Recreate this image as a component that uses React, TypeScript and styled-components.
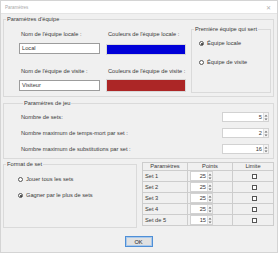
import styled, {createGlobalStyle} from 'styled-components';

const GlobalStyle = createGlobalStyle`
	html, body {
		margin: 0;
		padding: 0;
		background: #f0f0f0;
	}
	body {
		font-family: 'Liberation Sans', Arial, sans-serif;
		font-size: 5.7px;
		color: #383838;
	}
`;

const Window = styled.div`
	width: 278px;
	height: 253px;
	box-sizing: border-box;
	display: flex;
	flex-direction: column;
	background: #f0f0f0;
	border: 1px solid #d4d4d4;
	overflow: hidden;
`;
const TitleBar = styled.div`
	height: 12px;
	flex-shrink: 0;
	display: flex;
	align-items: center;
	justify-content: space-between;
	padding: 0 6px 0 4px;
	background: #fff;
	border-bottom: 1px solid #e4e4e4;
	color: #a8a8a8;
	font-size: 4.5px;
`;
const Close = styled.span`
	font-size: 6px;
	color: #b0b0b0;
`;
const Body = styled.div`
	flex: 1;
	display: flex;
	flex-direction: column;
	padding: 2px 3px 0 2px;
`;
const Group = styled.fieldset`
	margin: 0;
	padding: 0;
	min-width: 0;
	border: 1px solid #dadada;
	box-sizing: border-box;
`;
const Legend = styled.legend`
	margin-left: 2px;
	padding: 0 1px;
	line-height: 7px;
`;
const TeamRow = styled.div`
	display: flex;
	align-items: flex-start;
`;
const TeamGrid = styled.div`
	display: grid;
	grid-template-columns: 81px 80px;
	column-gap: 6px;
	padding: 8px 0 4px 15px;
	align-items: start;
	white-space: nowrap;
`;
const FieldLabel = styled.div<{$top?: number}>`
	line-height: 7px;
	margin-top: ${({$top}) => $top ?? 0}px;
	padding-left: 2px;
	margin-bottom: 5px;
`;
const TextBox = styled.div`
	height: 11px;
	box-sizing: border-box;
	background: #fff;
	border: 1px solid #9c9c9c;
	padding-left: 2px;
	line-height: 9px;
`;
const Swatch = styled.div<{$color: string; $h: number; $shift: number}>`
	height: ${({$h}) => $h}px;
	margin-top: ${({$shift}) => $shift}px;
	background: ${({$color}) => $color};
	border: 1px solid #d8d8d8;
	box-sizing: border-box;
`;
const ServeGroup = styled(Group)`
	width: 80px;
	height: 67px;
	margin: 3px 2px 0 auto;
`;
const RadioList = styled.div<{$gap: number; $top: number; $left: number}>`
	display: flex;
	flex-direction: column;
	gap: ${({$gap}) => $gap}px;
	padding: ${({$top}) => $top}px 0 0 ${({$left}) => $left}px;
`;
const RadioRow = styled.div`
	display: flex;
	align-items: center;
	gap: 3px;
	line-height: 7px;
`;
const RadioDot = styled.span<{$on?: boolean}>`
	width: 5px;
	height: 5px;
	box-sizing: border-box;
	border-radius: 50%;
	border: 1px solid #555;
	background: #fff;
	display: flex;
	align-items: center;
	justify-content: center;
	&::after {
		content: '';
		width: 2px;
		height: 2px;
		border-radius: 50%;
		background: ${({$on}) => ($on ? '#222' : 'transparent')};
	}
`;
const GameGroup = styled(Group)`
	margin-top: 3px;
	padding: 5px 4px 4px 17px;
	display: flex;
	flex-direction: column;
	gap: 6px;
`;
const GameRow = styled.div`
	height: 10px;
	display: flex;
	align-items: center;
	justify-content: space-between;
`;
const SpinBox = styled.div<{$w: number}>`
	width: ${({$w}) => $w}px;
	height: 10px;
	box-sizing: border-box;
	display: flex;
	background: #fff;
	border: 1px solid #d2d2d2;
`;
const SpinValue = styled.span`
	flex: 1;
	text-align: right;
	line-height: 8px;
	padding-right: 1px;
`;
const SpinArrows = styled.span`
	width: 4px;
	display: flex;
	flex-direction: column;
	justify-content: center;
	gap: 1px;
	background: #f4f4f4;
	border-left: 1px solid #e0e0e0;
`;
const BottomRow = styled.div`
	display: flex;
	align-items: flex-start;
	margin-top: 2px;
	gap: 5px;
`;
const FormatGroup = styled(Group)`
	width: 134px;
	height: 67px;
	flex-shrink: 0;
`;
const SetTable = styled.table`
	width: 128px;
	margin-top: 1px;
	border-collapse: collapse;
	table-layout: fixed;
`;
const Th = styled.th<{$w: number}>`
	width: ${({$w}) => $w}px;
	height: 7px;
	padding: 0;
	font-weight: normal;
	line-height: 7px;
	border: 1px solid #cdcdcd;
	text-align: center;
`;
const Td = styled.td<{$center?: boolean}>`
	height: 10px;
	padding: 0 0 0 2px;
	line-height: 7px;
	border: 1px solid #cdcdcd;
	text-align: ${({$center}) => ($center ? 'center' : 'left')};
	vertical-align: middle;
`;
const CellSpin = styled.div`
	display: flex;
	align-items: center;
	height: 10px;
`;
const CheckBox = styled.span`
	display: inline-block;
	width: 5px;
	height: 5px;
	box-sizing: border-box;
	border: 1px solid #555;
	background: #fff;
	vertical-align: middle;
`;
const Footer = styled.div`
	display: flex;
	justify-content: center;
	padding-top: 8px;
`;
const OkButton = styled.button`
	width: 28px;
	height: 11px;
	padding: 0;
	font: inherit;
	color: #262626;
	background: #e1e1e1;
	border: 1px solid #4f8fd6;
	box-shadow: inset 0 0 0 1px #a9c9ec;
	line-height: 8px;
`;

function Arrows() {
	return (
		<SpinArrows>
			<svg width='4' height='3' viewBox='0 0 4 3'>
				<path d='M0.5 2.5 L2 0.8 L3.5 2.5 Z' fill='#666' />
			</svg>
			<svg width='4' height='3' viewBox='0 0 4 3'>
				<path d='M0.5 0.5 L2 2.2 L3.5 0.5 Z' fill='#666' />
			</svg>
		</SpinArrows>
	);
}

function Spinner({value, width}: {value: number; width: number}) {
	return (
		<SpinBox $w={width}>
			<SpinValue>{value}</SpinValue>
			<Arrows />
		</SpinBox>
	);
}

const gameRows = [
	{label: 'Nombre de sets:', value: 5},
	{label: 'Nombre maximum de temps-mort par set :', value: 2},
	{label: 'Nombre maximum de substitutions par set :', value: 16},
];

const sets = [
	{name: 'Set 1', points: 25},
	{name: 'Set 2', points: 25},
	{name: 'Set 3', points: 25},
	{name: 'Set 4', points: 25},
	{name: 'Set de 5', points: 15},
];

function App() {
	return (
		<>
			<GlobalStyle />
			<Window>
				<TitleBar>
					<span>Paramètres</span>
					<Close>✕</Close>
				</TitleBar>
				<Body>
					<Group>
						<Legend>Paramètres d'équipe</Legend>
						<TeamRow>
							<TeamGrid>
								<FieldLabel>Nom de l'équipe locale :</FieldLabel>
								<FieldLabel>Couleurs de l'équipe locale :</FieldLabel>
								<TextBox>Local</TextBox>
								<Swatch $color='#0000d8' $h={11} $shift={1} />
								<FieldLabel $top={13}>Nom de l'équipe de visite :</FieldLabel>
								<FieldLabel $top={13}>Couleurs de l'équipe de visite :</FieldLabel>
								<TextBox>Visiteur</TextBox>
								<Swatch $color='#ac2626' $h={13} $shift={-1} />
							</TeamGrid>
							<ServeGroup>
								<Legend>Première équipe qui sert</Legend>
								<RadioList $gap={12} $top={7} $left={7}>
									<RadioRow>
										<RadioDot $on />
										Équipe locale
									</RadioRow>
									<RadioRow>
										<RadioDot />
										Équipe de visite
									</RadioRow>
								</RadioList>
							</ServeGroup>
						</TeamRow>
					</Group>

					<GameGroup>
						<Legend>Paramètres de jeu</Legend>
						{gameRows.map((row) => (
							<GameRow key={row.label}>
								<span>{row.label}</span>
								<Spinner value={row.value} width={47} />
							</GameRow>
						))}
					</GameGroup>

					<BottomRow>
						<FormatGroup>
							<Legend>Format de set</Legend>
							<RadioList $gap={9} $top={8} $left={14}>
								<RadioRow>
									<RadioDot />
									Jouer tous les sets
								</RadioRow>
								<RadioRow>
									<RadioDot $on />
									Gagner par le plus de sets
								</RadioRow>
							</RadioList>
						</FormatGroup>
						<SetTable>
							<thead>
								<tr>
									<Th $w={44}>Paramètres</Th>
									<Th $w={44}>Points</Th>
									<Th $w={40}>Limite</Th>
								</tr>
							</thead>
							<tbody>
								{sets.map((s) => (
									<tr key={s.name}>
										<Td>{s.name}</Td>
										<Td>
											<CellSpin>
												<Spinner value={s.points} width={23} />
											</CellSpin>
										</Td>
										<Td $center>
											<CheckBox />
										</Td>
									</tr>
								))}
							</tbody>
						</SetTable>
					</BottomRow>

					<Footer>
						<OkButton>OK</OkButton>
					</Footer>
				</Body>
			</Window>
		</>
	);
}

export default App;
